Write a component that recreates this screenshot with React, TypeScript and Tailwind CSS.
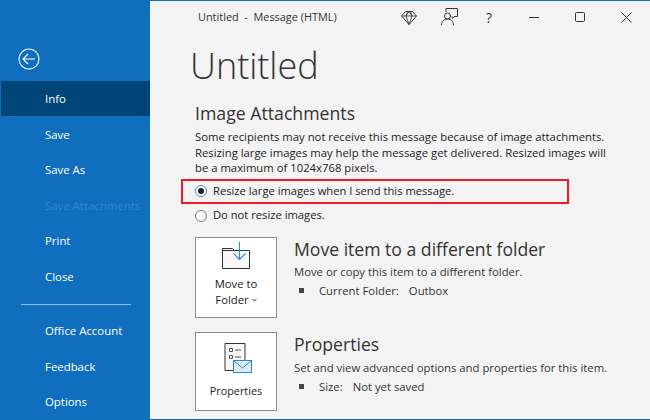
import React from "react";

const font = { fontFamily: '"Open Sans", "Noto Sans", sans-serif' };

function NavItem({ label, active, disabled }: { label: string; active?: boolean; disabled?: boolean }) {
  return (
    <div className={`h-[35.8px] flex items-center pl-[44px] pt-[1px] text-[11.4px] ${active ? "bg-[#004578] text-white" : disabled ? "text-[#3a84c9]" : "text-white"}`}>
      {label}
    </div>
  );
}

function Diamond() {
  return (
    <svg width="16" height="16" viewBox="0 0 16 16" fill="none" stroke="#333" strokeWidth="1">
      <path d="M4.5 1.5h7l4 4.5L8 14.5.5 6z" />
      <path d="M.5 6h15M5 6l3 8.5L11 6M5 6l1.5-4.5M11 6L9.5 1.5M5 6l3-4.5L11 6" strokeWidth="0.8" />
    </svg>
  );
}

function Coauthor() {
  return (
    <svg width="18" height="18" viewBox="0 0 18 18" fill="none" stroke="#333" strokeWidth="1">
      <path d="M5 4V.5h11.5v8H13l-1.5 2-.5-2" />
      <circle cx="6.5" cy="8" r="3" />
      <path d="M.5 17c0-3.5 2.5-6 6-6s6 2.5 6 6" />
    </svg>
  );
}

function MoveIcon() {
  return (
    <svg width="30" height="28" viewBox="0 0 30 28" fill="none">
      <path d="M1.5 6.5h10l2 2h15v18h-27z" fill="#f8f8f8" stroke="#333" />
      <path d="M1.5 8.5h12" stroke="#333" />
      <path d="M18.5 0v17M12.5 11.5l6 6 6-6" stroke="#2b88d8" strokeWidth="1.1" />
    </svg>
  );
}

function PropsIcon() {
  return (
    <svg width="28" height="30" viewBox="0 0 28 30" fill="none">
      <path d="M1 .5h20v27H1z" fill="#f8f8f8" stroke="#333" />
      <path d="M5.5 5.5h3v3h-3zM5.5 12.5h3v3h-3z" stroke="#555" />
      <path d="M11 7h6M11 14h6" stroke="#555" />
      <rect x="9.5" y="17.5" width="18" height="12" fill="#dcebf7" stroke="#2b88d8" />
      <path d="M10 18l8.5 7 8.5-7" stroke="#2b88d8" />
    </svg>
  );
}

function Radio({ checked }: { checked?: boolean }) {
  return (
    <span className={`w-[12px] h-[12px] rounded-full border bg-white flex items-center justify-center shrink-0 ${checked ? "border-[#3f8fd2]" : "border-[#777]"}`}>
      {checked && <span className="w-[6px] h-[6px] rounded-full bg-[#222]" />}
    </span>
  );
}

function Bullet({ a, b }: { a: string; b: string }) {
  return (
    <div className="flex items-center text-[11.3px] leading-[16px] text-[#333] mt-[3px]">
      <span className="w-[5px] h-[5px] bg-[#444] ml-[5px] mr-[15px]" />
      <span className="mr-[10px]">{a}</span>
      <span>{b}</span>
    </div>
  );
}

export default function App() {
  return (
    <div className="w-[650px] h-[420px] flex overflow-hidden bg-[#106ebe] pt-px pb-px pl-px" style={font}>
      <aside className="w-[149px] shrink-0 flex flex-col bg-[#106ebe]">
        <div className="h-[80px] pl-[17px] pt-[47px]">
          <svg width="22" height="22" viewBox="0 0 22 22" fill="none" stroke="white" strokeWidth="1.1">
            <circle cx="11" cy="11" r="10" />
            <path d="M17 11H5M10 6l-5 5 5 5" />
          </svg>
        </div>
        <NavItem label="Info" active />
        <NavItem label="Save" />
        <NavItem label="Save As" />
        <NavItem label="Save Attachments" disabled />
        <NavItem label="Print" />
        <NavItem label="Close" />
        <div className="h-[1px] bg-[#8dbde6] ml-[20px] mr-[19px] mt-[10px] mb-[8px]" />
        <NavItem label="Office Account" />
        <NavItem label="Feedback" />
        <NavItem label="Options" />
      </aside>
      <main className="flex-1 bg-[#f3f3f3] min-w-0 flex flex-col">
        <header className="h-[33px] flex items-center text-[#333] shrink-0">
          <div className="ml-[48px] w-[156px] text-[10.9px] whitespace-pre">Untitled  -  Message (HTML)</div>
          <div className="ml-[47px] flex items-center"><Diamond /></div>
          <div className="ml-[24px] flex items-center mt-[-1px]"><Coauthor /></div>
          <div className="ml-[27px] text-[14px] w-[10px]">?</div>
          <svg className="ml-[33px]" width="11" height="11" viewBox="0 0 11 11" stroke="#333" fill="none"><path d="M0 5.5h10" /></svg>
          <svg className="ml-[35px]" width="11" height="11" viewBox="0 0 11 11" stroke="#333" fill="none"><rect x="0.5" y="0.5" width="9" height="9" rx="1" /></svg>
          <svg className="ml-[35px]" width="11" height="11" viewBox="0 0 11 11" stroke="#333" fill="none"><path d="M.5.5l10 10M10.5.5l-10 10" /></svg>
        </header>
        <div className="pl-[45px] pr-[15px]">
          <h1 className="ml-[-5px] text-[36px] leading-[44px] font-light text-[#333] mt-[10px]">Untitled</h1>
          <h2 className="text-[17.7px] leading-[24px] text-[#333] mt-[13px]">Image Attachments</h2>
          <p className="text-[11.3px] leading-[15.5px] text-[#222] mt-[4px] w-[420px]">
            Some recipients may not receive this message because of image attachments. Resizing large images may help the message get delivered. Resized images will be a maximum of 1024x768 pixels.
          </p>
          <div className="flex items-center gap-[6px] text-[11.2px] text-[#222] h-[25px] w-[388px] border-2 border-[#ed1c24] ml-[-14px] pl-[12px] mt-[3px]">
            <Radio checked />
            <span>Resize large images when I send this message.</span>
          </div>
          <div className="flex items-center gap-[6px] text-[11.2px] text-[#222] h-[16px] mt-[4px]">
            <Radio />
            <span>Do not resize images.</span>
          </div>
          <section className="flex mt-[13px]">
            <div className="w-[82px] h-[81px] border border-[#8a8a8a] bg-white flex flex-col items-center pt-[4px] shrink-0">
              <MoveIcon />
              <div className="text-[11.3px] leading-[16px] text-[#222] text-center mt-[6px]">
                <div>Move to</div>
                <div className="flex items-center justify-center gap-[3px]">
                  Folder
                  <svg width="5" height="4" viewBox="0 0 5 4" fill="none" stroke="#333"><path d="M.5 1l2 2 2-2" /></svg>
                </div>
              </div>
            </div>
            <div className="ml-[17px] text-[#333]">
              <div className="text-[17.6px] leading-[24px]">Move item to a different folder</div>
              <div className="text-[11.3px] leading-[16px] mt-[3px]">Move or copy this item to a different folder.</div>
              <Bullet a="Current Folder:" b="Outbox" />
            </div>
          </section>
          <section className="flex mt-[14px]">
            <div className="w-[82px] h-[79px] border border-[#8a8a8a] bg-white flex flex-col items-center pt-[10px] shrink-0">
              <div className="ml-[3px]"><PropsIcon /></div>
              <div className="text-[10.8px] leading-[16px] text-[#222] text-center mt-[10px]">Properties</div>
            </div>
            <div className="ml-[17px] text-[#333]">
              <div className="text-[17.6px] leading-[24px]">Properties</div>
              <div className="text-[11.3px] leading-[16px] mt-[4px]">Set and view advanced options and properties for this item.</div>
              <Bullet a="Size:" b="Not yet saved" />
            </div>
          </section>
        </div>
      </main>
    </div>
  );
}
